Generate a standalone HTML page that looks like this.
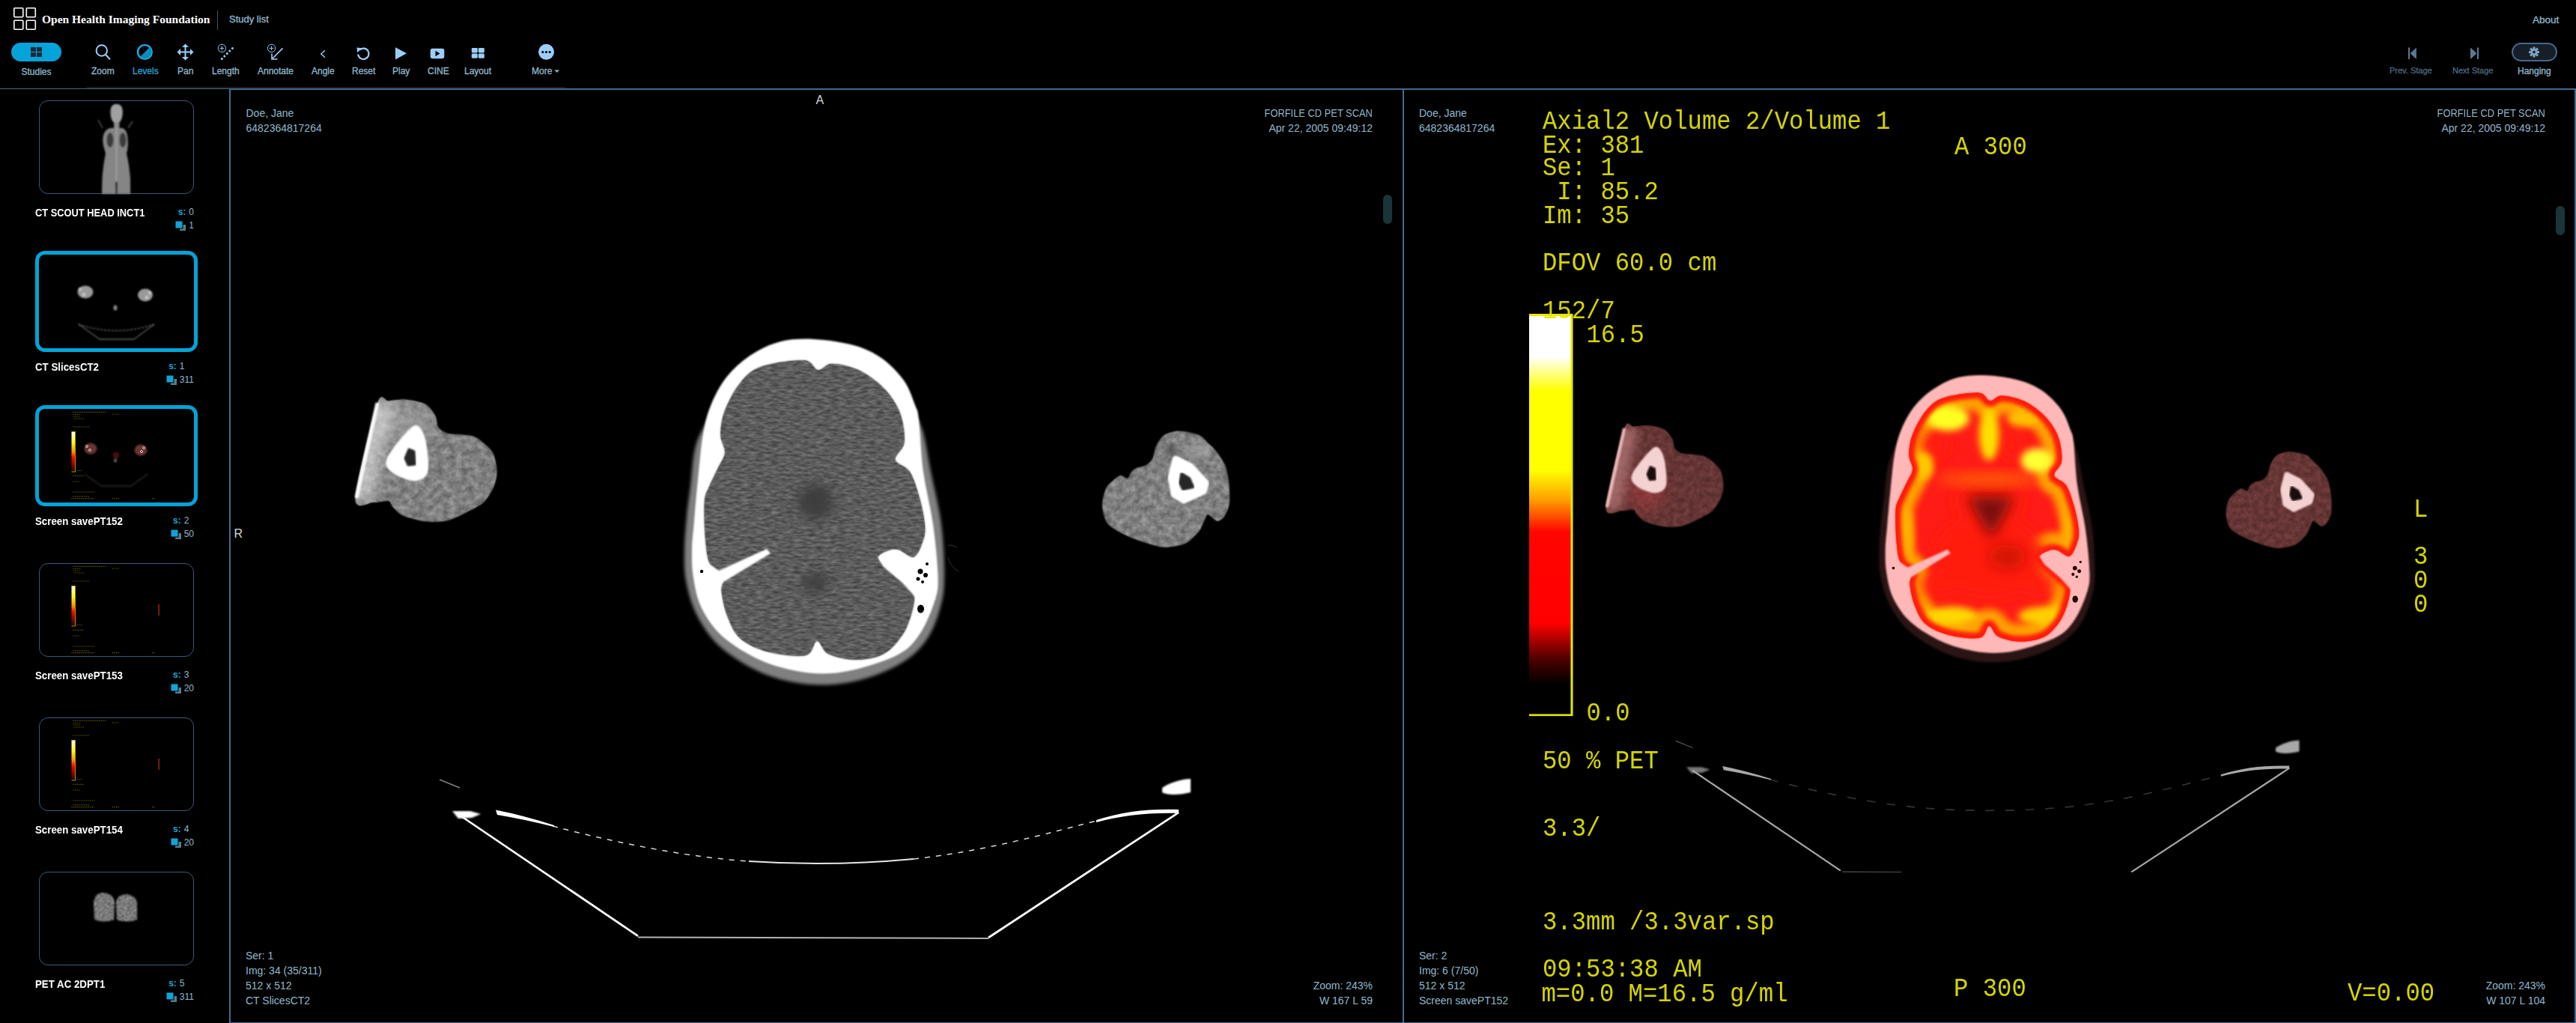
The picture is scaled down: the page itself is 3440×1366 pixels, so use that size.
<!DOCTYPE html>
<html><head><meta charset="utf-8">
<style>
*{margin:0;padding:0;box-sizing:border-box}
html,body{width:3440px;height:1366px;overflow:hidden;background:#000}
body{position:relative;font-family:"Liberation Sans",sans-serif;color:#91b9cd}
.a{position:absolute;white-space:pre;line-height:1}
.lbl{font-size:12px;color:#91b9cd;-webkit-text-stroke:0.3px currentColor}
.ov{font-size:14px;color:#91b9cd;}
.ye{font-family:"Liberation Mono",monospace;color:#e6e600;font-size:32.25px;opacity:0.92}
.tt{font-size:14px;color:#fff;font-weight:bold}
.sn{font-size:12px;color:#91b9cd}
.sl{color:#20a5d6;font-weight:bold}
svg{position:absolute;overflow:visible}
</style></head><body>

<!-- ===== HEADER ===== -->
<svg style="left:0;top:0" width="60" height="50">
 <g fill="none" stroke="#fff" stroke-width="1.6">
  <rect x="18.8" y="10.8" width="12" height="12" rx="1"/>
  <rect x="35.3" y="10.8" width="12" height="12" rx="1"/>
  <rect x="18.8" y="27.3" width="12" height="12" rx="1"/>
  <rect x="35.3" y="27.3" width="12" height="12" rx="1"/>
 </g>
</svg>
<div class="a" id="brand" style="left:56px;top:17.5px;font-family:'Liberation Serif',serif;font-weight:bold;font-size:15.5px;color:#fff">Open Health Imaging Foundation</div>
<div class="a" style="left:290px;top:14px;width:1px;height:26px;background:#3d5564"></div>
<div class="a" id="studylist" style="left:306px;top:19px;font-size:13px;color:#91b9cd;-webkit-text-stroke:0.3px #91b9cd">Study list</div>
<div class="a" id="about" style="left:3382px;top:19.5px;font-size:13.5px;color:#91b9cd;-webkit-text-stroke:0.3px #91b9cd">About</div>

<!-- ===== TOOLBAR ===== -->
<div class="a" style="left:15px;top:57px;width:67px;height:25px;border-radius:13px;background:#05a3d9"></div>
<svg style="left:41px;top:63px" width="16" height="14"><g fill="#1f2a38"><rect x="0" y="0" width="7" height="6"/><rect x="8" y="0" width="7" height="6"/><rect x="0" y="7" width="7" height="6"/><rect x="8" y="7" width="7" height="6"/></g></svg>
<div class="a lbl" style="left:28.5px;top:90px">Studies</div>

<!-- zoom -->
<svg style="left:120px;top:55px" width="32" height="30"><g fill="none" stroke="#9ccef9" stroke-width="2"><circle cx="15.8" cy="12.5" r="7.2"/><line x1="21" y1="18" x2="27" y2="24.2"/></g></svg>
<div class="a lbl" style="left:122px;top:89px">Zoom</div>
<!-- levels -->
<svg style="left:180px;top:56px" width="28" height="28"><circle cx="13.4" cy="13.5" r="9.4" fill="none" stroke="#18ade4" stroke-width="2.4"/><path d="M20 7 A9.2 9.2 0 0 1 7 20 Z" fill="#0a8cbd"/></svg>
<div class="a lbl" style="left:177px;top:89px;color:#20a5d6">Levels</div>
<!-- pan -->
<svg style="left:236px;top:58px" width="24" height="24"><g fill="#9ccef9" stroke="#9ccef9"><line x1="11.5" y1="2" x2="11.5" y2="21" stroke-width="2"/><line x1="2" y1="11.5" x2="21" y2="11.5" stroke-width="2"/><path d="M11.5 0.5 L16 5 L7 5Z M11.5 22.5 L16 18 L7 18Z M0.5 11.5 L5 7 L5 16Z M22.5 11.5 L18 7 L18 16Z" stroke="none"/></g></svg>
<div class="a lbl" style="left:237px;top:89px">Pan</div>
<!-- length -->
<svg style="left:288px;top:56px" width="30" height="30"><g fill="none" stroke="#9ccef9" stroke-width="1"><circle cx="8.4" cy="8.4" r="5.2"/><line x1="8.4" y1="5.5" x2="8.4" y2="11.3"/><line x1="5.5" y1="8.4" x2="11.3" y2="8.4"/></g><g fill="#9ccef9"><circle cx="8.4" cy="22.4" r="1.5"/><circle cx="11.8" cy="19" r="1.5"/><circle cx="15.3" cy="15.5" r="1.5"/><circle cx="18.8" cy="12" r="1.5"/><circle cx="22.4" cy="8.4" r="1.5"/></g></svg>
<div class="a lbl" style="left:283px;top:89px">Length</div>
<!-- annotate -->
<svg style="left:354px;top:56px" width="30" height="30"><g fill="none" stroke="#9ccef9" stroke-width="1"><circle cx="8.6" cy="8.4" r="5.2"/><line x1="8.6" y1="5.5" x2="8.6" y2="11.3"/><line x1="5.7" y1="8.4" x2="11.5" y2="8.4"/></g><g fill="none" stroke="#9ccef9" stroke-width="1.6"><line x1="23.5" y1="8.4" x2="9.5" y2="22.5"/><polyline points="9,15.5 9,23 16.5,23"/></g></svg>
<div class="a lbl" style="left:344px;top:89px">Annotate</div>
<!-- angle -->
<svg style="left:426px;top:64px" width="12" height="16"><polyline points="8,3.2 2.8,8 8,12.8" fill="none" stroke="#9ccef9" stroke-width="1.4"/></svg>
<div class="a lbl" style="left:416px;top:89px">Angle</div>
<!-- reset -->
<svg style="left:474px;top:61px" width="22" height="22"><path d="M6.5 5.5 A7.2 7.2 0 1 1 4.2 11.5" fill="none" stroke="#9ccef9" stroke-width="2.2"/><path d="M2.5 2.5 L9.5 3.2 L3.2 9.3Z" fill="#9ccef9"/></svg>
<div class="a lbl" style="left:470px;top:89px">Reset</div>
<!-- play -->
<svg style="left:526px;top:62px" width="20" height="20"><path d="M2 1.3 L17 9.3 L2 17.5Z" fill="#9ccef9"/></svg>
<div class="a lbl" style="left:524px;top:89px">Play</div>
<!-- cine -->
<svg style="left:573px;top:63px" width="22" height="18"><rect x="1.7" y="1.8" width="18.6" height="13.4" rx="3" fill="#9ccef9"/><path d="M8.5 4.8 L14.5 8.5 L8.5 12.2Z" fill="#000"/></svg>
<div class="a lbl" style="left:571px;top:89px">CINE</div>
<!-- layout -->
<svg style="left:628px;top:62px" width="22" height="18"><g fill="#9ccef9"><rect x="1.8" y="2" width="8" height="6.4" rx="1.3"/><rect x="10.8" y="2" width="8" height="6.4" rx="1.3"/><rect x="1.8" y="9.4" width="8" height="6.4" rx="1.3"/><rect x="10.8" y="9.4" width="8" height="6.4" rx="1.3"/></g></svg>
<div class="a lbl" style="left:620px;top:89px">Layout</div>
<!-- more -->
<svg style="left:716px;top:56px" width="28" height="28"><circle cx="13.5" cy="13.3" r="10.5" fill="#9ccef9"/><g fill="#000"><circle cx="8.8" cy="13.5" r="1.6"/><circle cx="13.5" cy="13.5" r="1.6"/><circle cx="18.2" cy="13.5" r="1.6"/></g></svg>
<div class="a lbl" style="left:710px;top:89px">More</div>
<svg style="left:740px;top:92px" width="10" height="8"><path d="M0.5 1.5 L7 1.5 L3.75 5Z" fill="#91b9cd"/></svg>

<!-- right toolbar -->
<svg style="left:3214px;top:62px" width="16" height="20"><rect x="2" y="1.5" width="2" height="15.5" fill="#5a7a94"/><path d="M12.8 1.5 L12.8 17 L4.5 9.2Z" fill="#5a7a94"/></svg>
<div class="a lbl" style="left:3191px;top:89px;font-size:11px;color:#4f6a80">Prev. Stage</div>
<svg style="left:3297px;top:62px" width="16" height="20"><rect x="11" y="1.5" width="2" height="15.5" fill="#5a7a94"/><path d="M2 1.5 L2 17 L10.5 9.2Z" fill="#5a7a94"/></svg>
<div class="a lbl" style="left:3275px;top:89px;font-size:11px;color:#4f6a80">Next Stage</div>
<div class="a" style="left:3354px;top:57px;width:61px;height:25px;border-radius:13px;background:#161e28;border:2px solid #46678c"></div>
<svg style="left:3375px;top:61px" width="18" height="18"><g transform="translate(9,8.6)" fill="#7ea3c4"><circle r="4.6"/><g id="teeth"><rect x="-1.5" y="-7" width="3" height="14"/><rect x="-1.5" y="-7" width="3" height="14" transform="rotate(45)"/><rect x="-1.5" y="-7" width="3" height="14" transform="rotate(90)"/><rect x="-1.5" y="-7" width="3" height="14" transform="rotate(135)"/></g><circle r="1.8" fill="#161e28"/></g></svg>
<div class="a lbl" style="left:3362px;top:89px">Hanging</div>

<!-- header bottom line -->
<div class="a" style="left:115px;top:115.5px;width:641px;height:2.5px;background:#161c22;border-radius:2px 2px 0 0"></div>
<div class="a" style="left:0;top:118px;width:3440px;height:1px;background:#4a6976"></div>

<!-- ===== SIDEBAR ===== -->
<div class="a" style="left:52px;top:134px;width:207px;height:125px;border:1px solid #3d5a76;border-radius:12px"></div>
<div class="a tt" style="left:46.5px;top:277.1px;transform:scaleX(0.918);transform-origin:0 0">CT SCOUT HEAD INCT1</div>
<div class="a" id="snum0" style="right:3181px;top:276.8px;font-size:12px;text-align:left"><table style="border-collapse:collapse;margin-left:auto"><tr><td class="sl" style="text-align:right;padding:0 4px 0 0;height:18.5px;vertical-align:top">s:</td><td style="padding:0;vertical-align:top;color:#91b9cd">0</td></tr><tr><td style="text-align:right;padding:0 4px 0 0;vertical-align:top"><svg style="position:relative;display:inline-block" width="14" height="14"><rect x="6" y="5" width="8" height="8" fill="#5a7a8a"/><rect x="0" y="0" width="10" height="10" fill="#0ea4d8" stroke="#000" stroke-width="1"/></svg></td><td style="padding:0;vertical-align:top;color:#91b9cd">1</td></tr></table></div>
<div class="a" style="left:47px;top:335px;width:217px;height:135px;border:5px solid #00a4d9;border-radius:13px"></div>
<div class="a tt" style="left:46.5px;top:483.1px;transform:scaleX(0.95);transform-origin:0 0">CT SlicesCT2</div>
<div class="a" id="snum1" style="right:3181px;top:482.8px;font-size:12px;text-align:left"><table style="border-collapse:collapse;margin-left:auto"><tr><td class="sl" style="text-align:right;padding:0 4px 0 0;height:18.5px;vertical-align:top">s:</td><td style="padding:0;vertical-align:top;color:#91b9cd">1</td></tr><tr><td style="text-align:right;padding:0 4px 0 0;vertical-align:top"><svg style="position:relative;display:inline-block" width="14" height="14"><rect x="6" y="5" width="8" height="8" fill="#5a7a8a"/><rect x="0" y="0" width="10" height="10" fill="#0ea4d8" stroke="#000" stroke-width="1"/></svg></td><td style="padding:0;vertical-align:top;color:#91b9cd">311</td></tr></table></div>
<div class="a" style="left:47px;top:541px;width:217px;height:135px;border:5px solid #00a4d9;border-radius:13px"></div>
<div class="a tt" style="left:46.5px;top:689.1px;transform:scaleX(0.95);transform-origin:0 0">Screen savePT152</div>
<div class="a" id="snum2" style="right:3181px;top:688.8px;font-size:12px;text-align:left"><table style="border-collapse:collapse;margin-left:auto"><tr><td class="sl" style="text-align:right;padding:0 4px 0 0;height:18.5px;vertical-align:top">s:</td><td style="padding:0;vertical-align:top;color:#91b9cd">2</td></tr><tr><td style="text-align:right;padding:0 4px 0 0;vertical-align:top"><svg style="position:relative;display:inline-block" width="14" height="14"><rect x="6" y="5" width="8" height="8" fill="#5a7a8a"/><rect x="0" y="0" width="10" height="10" fill="#0ea4d8" stroke="#000" stroke-width="1"/></svg></td><td style="padding:0;vertical-align:top;color:#91b9cd">50</td></tr></table></div>
<div class="a" style="left:52px;top:752px;width:207px;height:125px;border:1px solid #3d5a76;border-radius:12px"></div>
<div class="a tt" style="left:46.5px;top:895.1px;transform:scaleX(0.95);transform-origin:0 0">Screen savePT153</div>
<div class="a" id="snum3" style="right:3181px;top:894.8px;font-size:12px;text-align:left"><table style="border-collapse:collapse;margin-left:auto"><tr><td class="sl" style="text-align:right;padding:0 4px 0 0;height:18.5px;vertical-align:top">s:</td><td style="padding:0;vertical-align:top;color:#91b9cd">3</td></tr><tr><td style="text-align:right;padding:0 4px 0 0;vertical-align:top"><svg style="position:relative;display:inline-block" width="14" height="14"><rect x="6" y="5" width="8" height="8" fill="#5a7a8a"/><rect x="0" y="0" width="10" height="10" fill="#0ea4d8" stroke="#000" stroke-width="1"/></svg></td><td style="padding:0;vertical-align:top;color:#91b9cd">20</td></tr></table></div>
<div class="a" style="left:52px;top:958px;width:207px;height:125px;border:1px solid #3d5a76;border-radius:12px"></div>
<div class="a tt" style="left:46.5px;top:1101.1px;transform:scaleX(0.95);transform-origin:0 0">Screen savePT154</div>
<div class="a" id="snum4" style="right:3181px;top:1100.8px;font-size:12px;text-align:left"><table style="border-collapse:collapse;margin-left:auto"><tr><td class="sl" style="text-align:right;padding:0 4px 0 0;height:18.5px;vertical-align:top">s:</td><td style="padding:0;vertical-align:top;color:#91b9cd">4</td></tr><tr><td style="text-align:right;padding:0 4px 0 0;vertical-align:top"><svg style="position:relative;display:inline-block" width="14" height="14"><rect x="6" y="5" width="8" height="8" fill="#5a7a8a"/><rect x="0" y="0" width="10" height="10" fill="#0ea4d8" stroke="#000" stroke-width="1"/></svg></td><td style="padding:0;vertical-align:top;color:#91b9cd">20</td></tr></table></div>
<div class="a" style="left:52px;top:1164px;width:207px;height:125px;border:1px solid #3d5a76;border-radius:12px"></div>
<div class="a tt" style="left:46.5px;top:1307.1px;transform:scaleX(0.95);transform-origin:0 0">PET AC 2DPT1</div>
<div class="a" id="snum5" style="right:3181px;top:1306.8px;font-size:12px;text-align:left"><table style="border-collapse:collapse;margin-left:auto"><tr><td class="sl" style="text-align:right;padding:0 4px 0 0;height:18.5px;vertical-align:top">s:</td><td style="padding:0;vertical-align:top;color:#91b9cd">5</td></tr><tr><td style="text-align:right;padding:0 4px 0 0;vertical-align:top"><svg style="position:relative;display:inline-block" width="14" height="14"><rect x="6" y="5" width="8" height="8" fill="#5a7a8a"/><rect x="0" y="0" width="10" height="10" fill="#0ea4d8" stroke="#000" stroke-width="1"/></svg></td><td style="padding:0;vertical-align:top;color:#91b9cd">311</td></tr></table></div>
<svg style="left:0;top:0" width="310" height="1366"><defs><filter id="tb" x="-20%" y="-20%" width="140%" height="140%"><feGaussianBlur stdDeviation="0.8"/></filter><linearGradient id="cbs" x1="0" y1="0" x2="0" y2="1"><stop offset="0" stop-color="#fff"/><stop offset="0.25" stop-color="#ffff20"/><stop offset="0.5" stop-color="#ff9000"/><stop offset="0.65" stop-color="#ff0000"/><stop offset="1" stop-color="#200000"/></linearGradient></defs>
<g filter="url(#tb)"><path d="M147.5,150 C147.5,141 151,139 155.5,139 C160,139 163.8,141 163.8,150 C163.8,157 161,165 155.5,165 C150,165 147.5,157 147.5,150Z" fill="#a0a0a0"/><rect x="152" y="163" width="7.5" height="9" fill="#8a8a8a"/><path d="M148,171 C141,172 137.3,178 137.3,188 C137.5,195 140,200 141,205 C139,215 137.3,226 136.5,238 L136,259 L174.2,259 L174,238 C173,226 171.5,215 169,205 C170.5,200 171,195 170.8,188 C170.5,178 168,172 163,171Z" fill="#858585"/><ellipse cx="147" cy="187" rx="4.5" ry="10" fill="#3a3a3a"/><ellipse cx="164" cy="187" rx="4.5" ry="10" fill="#3a3a3a"/><rect x="154.5" y="171" width="2" height="70" fill="#b5b5b5" opacity="0.6"/><path d="M154,243 L157,243 L156.5,259 L154.5,259Z" fill="#1a1a1a"/><path d="M137,171 L131,160 M171,171 L177,162" stroke="#555" stroke-width="1.5"/></g>
<g filter="url(#tb)"><ellipse cx="114" cy="390" rx="10.5" ry="8.5" fill="#9a9a9a"/><ellipse cx="194" cy="394" rx="10" ry="8.5" fill="#9a9a9a"/><g fill="none" stroke="#eee" stroke-width="1"><circle cx="106.7" cy="386" r="1.6"/><circle cx="112" cy="393.3" r="1.6"/><circle cx="200.2" cy="390.8" r="1.6"/><circle cx="195.9" cy="397.3" r="1.6"/></g><ellipse cx="154" cy="411" rx="2.5" ry="3.5" fill="#888"/><path d="M105,433 L133,453 L179,453 L206,433" fill="none" stroke="#bbb" stroke-width="0.8"/><path d="M105,433 Q155,450 206,433" fill="none" stroke="#ccc" stroke-width="0.8" stroke-dasharray="3 2"/></g>
<g stroke="#c8b400" stroke-width="1.2" stroke-dasharray="1.2 1.3" opacity="0.55"><path d="M97.5,550.3 H142.5"/><path d="M97.5,553.5 H108.0"/><path d="M97.5,556.0 H106.0"/><path d="M98.5,559.0 H112.0"/><path d="M97.5,570.0 H119.0"/><path d="M103.0,628.5 H110.0"/><path d="M97.5,635.4 H112.0"/><path d="M97.5,643.0 H106.0"/><path d="M97.5,657.0 H127.0"/><path d="M97.5,662.8 H120.0"/><path d="M95.5,665.7 H126.0"/><path d="M150,553.0 H160" /><path d="M150,665.7 H160"/><path d="M203,665.7 H207"/></g><rect x="95.5" y="576.7" width="4.6" height="52.8" fill="url(#cbs)"/><path d="M95.5,576.5 H100.6 V630.0 H95.5" fill="none" stroke="#d8c800" stroke-width="0.8"/>
<g filter="url(#tb)"><ellipse cx="121" cy="599" rx="8.5" ry="7.5" fill="#6a3434"/><ellipse cx="188" cy="601" rx="8.5" ry="7.5" fill="#6a3434"/><circle cx="155" cy="608" r="4.5" fill="#4a0808"/><ellipse cx="154" cy="615" rx="2" ry="2.5" fill="#666"/><path d="M113,633 L135,649 L175,649 L197,633" fill="none" stroke="#666" stroke-width="0.7"/></g><g fill="none" stroke="#ddd" stroke-width="0.9"><circle cx="116" cy="596" r="1.5"/><circle cx="120" cy="601" r="1.5"/><circle cx="192" cy="598" r="1.5"/><circle cx="189" cy="603" r="1.5"/></g>
<g stroke="#c8b400" stroke-width="1.2" stroke-dasharray="1.2 1.3" opacity="0.55"><path d="M97.5,756.3 H142.5"/><path d="M97.5,759.5 H108.0"/><path d="M97.5,762.0 H106.0"/><path d="M98.5,765.0 H112.0"/><path d="M97.5,776.0 H119.0"/><path d="M103.0,834.5 H110.0"/><path d="M97.5,841.4 H112.0"/><path d="M97.5,849.0 H106.0"/><path d="M97.5,863.0 H127.0"/><path d="M97.5,868.8 H120.0"/><path d="M95.5,871.7 H126.0"/><path d="M150,759.0 H160" /><path d="M150,871.7 H160"/><path d="M203,871.7 H207"/></g><rect x="95.5" y="782.7" width="4.6" height="52.8" fill="url(#cbs)"/><path d="M95.5,782.5 H100.6 V836.0 H95.5" fill="none" stroke="#d8c800" stroke-width="0.8"/>
<rect x="211.5" y="807" width="1.2" height="15" fill="#c03010"/>
<g stroke="#c8b400" stroke-width="1.2" stroke-dasharray="1.2 1.3" opacity="0.55"><path d="M97.5,962.3 H142.5"/><path d="M97.5,965.5 H108.0"/><path d="M97.5,968.0 H106.0"/><path d="M98.5,971.0 H112.0"/><path d="M97.5,982.0 H119.0"/><path d="M103.0,1040.5 H110.0"/><path d="M97.5,1047.4 H112.0"/><path d="M97.5,1055.0 H106.0"/><path d="M97.5,1069.0 H127.0"/><path d="M97.5,1074.8 H120.0"/><path d="M95.5,1077.7 H126.0"/><path d="M150,965.0 H160" /><path d="M150,1077.7 H160"/><path d="M203,1077.7 H207"/></g><rect x="95.5" y="988.7" width="4.6" height="52.8" fill="url(#cbs)"/><path d="M95.5,988.5 H100.6 V1042.0 H95.5" fill="none" stroke="#d8c800" stroke-width="0.8"/>
<rect x="211.5" y="1013" width="1.2" height="15" fill="#c03010"/>
<defs><filter id="tex" x="0" y="0" width="100%" height="100%"><feTurbulence type="fractalNoise" baseFrequency="0.5" numOctaves="2" seed="3"/><feColorMatrix type="matrix" values="0 0 0 0 0.6  0 0 0 0 0.6  0 0 0 0 0.6  0 0 0 2 -0.6"/><feComposite in2="SourceGraphic" operator="in"/></filter></defs>
<clipPath id="t6c"><path d="M125,1205 Q127,1192 138,1192 Q152,1193 153,1206 L152,1228 Q140,1233 126,1228Z"/><path d="M155,1206 Q156,1194 169,1194 Q183,1196 183,1208 L183,1228 Q170,1233 156,1228Z"/></clipPath><filter id="t6n" x="0" y="0" width="100%" height="100%" color-interpolation-filters="sRGB"><feTurbulence type="fractalNoise" baseFrequency="0.6" numOctaves="2" seed="9"/><feColorMatrix type="matrix" values="1.3 0 0 0 -0.2  1.3 0 0 0 -0.2  1.3 0 0 0 -0.2  0 0 0 0 1"/></filter><g filter="url(#tb)"><rect x="120" y="1188" width="70" height="48" fill="#000" filter="url(#t6n)" clip-path="url(#t6c)"/></g>
</svg>

<!-- ===== VIEWPORTS ===== -->
<svg style="left:0;top:0" width="3440" height="1366" viewBox="0 0 3440 1366"><defs>
<filter id="b05" x="-10%" y="-10%" width="120%" height="120%"><feGaussianBlur stdDeviation="0.5"/></filter>
<filter id="b1" x="-10%" y="-10%" width="120%" height="120%"><feGaussianBlur stdDeviation="1"/></filter>
<filter id="b2" x="-50%" y="-10%" width="200%" height="120%"><feGaussianBlur stdDeviation="2"/></filter>
<filter id="b3" x="-20%" y="-20%" width="140%" height="140%"><feGaussianBlur stdDeviation="3"/></filter>
<filter id="b4" x="-20%" y="-20%" width="140%" height="140%"><feGaussianBlur stdDeviation="4"/></filter>
<filter id="b6" x="-30%" y="-30%" width="160%" height="160%"><feGaussianBlur stdDeviation="6"/></filter>
<filter id="b8w" x="-300%" y="-30%" width="700%" height="160%"><feGaussianBlur stdDeviation="8"/></filter>
<filter id="b8" x="-50%" y="-50%" width="200%" height="200%"><feGaussianBlur stdDeviation="8"/></filter>
<filter id="b10" x="-50%" y="-50%" width="200%" height="200%"><feGaussianBlur stdDeviation="10"/></filter>
<filter id="noiseCT" x="0" y="0" width="100%" height="100%" color-interpolation-filters="sRGB"><feTurbulence type="fractalNoise" baseFrequency="0.1 0.3" numOctaves="2" seed="7"/><feColorMatrix type="matrix" values="0.55 0 0 0 0.085  0.55 0 0 0 0.085  0.55 0 0 0 0.085  0 0 0 0 1"/></filter>
<filter id="noiseArm" x="0" y="0" width="100%" height="100%" color-interpolation-filters="sRGB"><feTurbulence type="fractalNoise" baseFrequency="0.12" numOctaves="3" seed="11"/><feColorMatrix type="matrix" values="0.6 0 0 0 0.2  0.6 0 0 0 0.2  0.6 0 0 0 0.2  0 0 0 0 1"/></filter>
<filter id="noisePet" x="0" y="0" width="100%" height="100%" color-interpolation-filters="sRGB"><feTurbulence type="fractalNoise" baseFrequency="0.12" numOctaves="3" seed="5"/><feColorMatrix type="matrix" values="0.4 0 0 0 0.2  0.25 0 0 0 0.09  0.25 0 0 0 0.09  0 0 0 0 1"/></filter>
<clipPath id="armclip"><path d="M518.7,535.6 C523.8,534.9 535.6,533.2 542.1,533.7 C548.6,534.2 562.3,536.7 567.5,539.6 C572.7,542.5 578.9,551.0 581.2,555.2 C583.5,559.4 583.0,567.7 585.1,570.8 C587.2,573.9 592.7,577.4 596.9,578.7 C601.1,580.0 611.2,579.8 616.4,580.6 C621.6,581.4 630.5,581.4 636.0,584.5 C641.5,587.6 653.8,598.0 657.5,604.0 C661.2,610.0 663.1,623.5 663.4,629.5 C663.7,635.5 661.8,643.5 659.5,649.0 C657.2,654.5 650.8,665.9 645.8,670.6 C640.8,675.3 628.8,681.0 622.3,684.3 C615.8,687.6 604.2,693.4 596.9,695.0 C589.6,696.6 575.3,696.9 567.5,696.0 C559.7,695.1 543.9,690.8 538.2,688.2 C532.5,685.6 527.1,679.0 524.5,676.4 C521.9,673.8 522.1,669.4 518.7,668.6 C515.3,667.8 504.9,671.0 499.0,670.6 C493.1,670.2 474.0,683.3 474.7,665.7 C475.4,648.1 498.1,555.9 504.0,538.6 C509.9,521.3 513.6,536.3 518.7,535.6Z"/><path d="M1544.4,595.2 C1546.5,591.0 1551.0,583.7 1555.0,581.1 C1559.0,578.5 1568.2,575.8 1574.3,575.8 C1580.4,575.8 1595.5,579.0 1600.7,581.1 C1605.9,583.2 1609.9,588.9 1613.0,591.7 C1616.1,594.5 1620.5,598.2 1623.6,602.2 C1626.7,606.2 1633.6,615.5 1635.9,621.6 C1638.2,627.7 1640.5,641.0 1641.2,648.0 C1641.9,655.0 1642.1,668.7 1641.2,674.3 C1640.3,679.9 1636.2,687.4 1634.1,690.2 C1632.0,693.0 1628.1,695.9 1625.3,695.4 C1622.5,694.9 1615.3,686.7 1613.0,686.7 C1610.7,686.7 1609.4,692.4 1607.8,695.4 C1606.2,698.4 1604.0,705.5 1600.7,709.5 C1597.4,713.5 1589.2,722.5 1583.1,725.3 C1577.0,728.1 1562.5,730.8 1555.0,730.6 C1547.5,730.4 1534.1,725.9 1526.8,723.6 C1519.5,721.3 1506.8,716.3 1500.5,713.0 C1494.2,709.7 1483.1,703.9 1479.3,699.0 C1475.5,694.1 1472.5,682.4 1472.3,676.1 C1472.1,669.8 1474.5,656.9 1477.6,651.5 C1480.7,646.1 1491.5,637.2 1495.2,635.6 C1498.9,634.0 1503.6,639.9 1505.7,639.2 C1507.8,638.5 1509.4,632.3 1511.0,630.4 C1512.6,628.5 1515.4,626.3 1518.0,625.1 C1520.6,623.9 1527.6,623.2 1530.4,621.6 C1533.2,620.0 1537.3,616.3 1539.2,612.8 C1541.1,609.3 1542.3,599.4 1544.4,595.2Z"/></clipPath>
<clipPath id="brainclip"><path d="M1092.3,494.0 C1098.5,494.8 1102.0,485.7 1111.0,485.7 C1120.0,485.7 1135.3,489.1 1146.3,494.0 C1157.3,498.9 1168.6,507.6 1176.8,515.0 C1185.0,522.4 1190.9,530.7 1195.6,538.5 C1200.3,546.3 1203.0,553.0 1205.0,562.0 C1207.0,571.0 1208.9,583.8 1207.3,592.5 C1205.7,601.2 1194.3,607.8 1195.6,614.0 C1196.9,620.2 1209.6,621.5 1215.0,630.0 C1220.4,638.5 1224.7,653.3 1228.0,665.0 C1231.3,676.7 1234.2,690.7 1235.0,700.0 C1235.8,709.3 1235.5,713.5 1233.0,720.8 C1230.5,728.1 1226.2,741.6 1220.3,743.7 C1214.4,745.8 1205.0,733.9 1197.4,733.5 C1189.8,733.1 1177.5,737.8 1174.5,741.2 C1171.5,744.6 1174.5,748.0 1179.6,753.9 C1184.7,759.8 1198.2,770.4 1205.0,776.8 C1211.8,783.1 1218.2,785.2 1220.3,792.0 C1222.4,798.8 1220.3,808.1 1217.8,817.4 C1215.2,826.7 1211.4,838.7 1205.0,848.0 C1198.6,857.3 1190.2,867.9 1179.6,873.4 C1169.0,878.9 1153.8,881.1 1141.5,881.0 C1129.2,880.9 1114.4,877.2 1106.0,873.0 C1097.6,868.8 1096.0,855.7 1091.0,856.0 C1086.0,856.3 1086.7,872.5 1076.0,875.0 C1065.3,877.5 1041.6,874.5 1027.1,870.8 C1012.6,867.1 998.3,861.0 989.0,853.0 C979.7,845.0 975.5,833.1 971.2,822.5 C967.0,811.9 964.4,798.2 963.5,789.5 C962.6,780.8 968.5,775.9 966.0,770.0 C963.5,764.1 952.3,762.1 948.3,753.9 C944.3,745.7 943.3,734.8 942.0,720.8 C940.7,706.8 939.9,681.8 940.7,670.0 C941.5,658.2 943.9,657.5 946.9,650.0 C949.9,642.5 955.1,632.9 958.6,625.3 C962.1,617.7 967.4,611.6 968.0,604.2 C968.6,596.8 962.2,590.1 962.2,580.7 C962.2,571.3 963.5,559.7 968.0,548.0 C972.5,536.3 980.9,520.2 989.1,510.4 C997.3,500.6 1003.2,494.2 1017.3,489.3 C1031.4,484.4 1061.1,480.2 1073.6,481.0 C1086.1,481.8 1086.1,493.2 1092.3,494.0Z"/></clipPath>
</defs><g><path d="M1087.7,460.0 C1103.4,460.8 1122.3,464.0 1136.0,468.0 C1149.7,472.0 1159.7,476.7 1170.0,484.0 C1180.3,491.3 1190.3,501.8 1198.0,512.0 C1205.7,522.2 1210.3,534.5 1216.0,545.0 C1221.7,555.5 1227.5,560.8 1232.0,575.0 C1236.5,589.2 1238.8,609.2 1243.0,630.0 C1247.2,650.8 1254.0,676.5 1257.0,700.0 C1260.0,723.5 1261.2,752.7 1261.0,771.0 C1260.8,789.3 1259.5,796.8 1256.0,810.0 C1252.5,823.2 1247.3,838.3 1240.0,850.0 C1232.7,861.7 1224.5,871.2 1212.0,880.0 C1199.5,888.8 1181.7,897.3 1165.0,903.0 C1148.3,908.7 1129.5,912.7 1112.0,914.0 C1094.5,915.3 1077.0,914.2 1060.0,911.0 C1043.0,907.8 1026.7,903.2 1010.0,895.0 C993.3,886.8 973.3,874.5 960.0,862.0 C946.7,849.5 937.3,834.5 930.0,820.0 C922.7,805.5 918.7,789.2 916.0,775.0 C913.3,760.8 913.8,749.2 914.0,735.0 C914.2,720.8 915.7,704.2 917.0,690.0 C918.3,675.8 919.8,666.3 922.0,650.0 C924.2,633.7 924.5,609.5 930.0,592.0 C935.5,574.5 947.3,559.0 955.0,545.0 C962.7,531.0 967.7,518.7 976.0,508.0 C984.3,497.3 994.0,488.5 1005.0,481.0 C1016.0,473.5 1028.2,466.5 1042.0,463.0 C1055.8,459.5 1072.0,459.2 1087.7,460.0Z" fill="#808080" filter="url(#b2)" opacity="1"/>
<path d="M1087.7,452.9 C1104.2,453.7 1125.1,456.8 1140.0,461.0 C1154.9,465.2 1165.8,470.2 1177.0,478.0 C1188.2,485.8 1199.5,497.5 1207.0,508.0 C1214.5,518.5 1218.7,532.3 1222.0,541.0 C1225.3,549.7 1225.2,545.2 1227.0,560.0 C1228.8,574.8 1229.8,606.7 1233.0,630.0 C1236.2,653.3 1242.7,676.5 1246.0,700.0 C1249.3,723.5 1252.2,754.0 1252.6,771.0 C1253.0,788.0 1252.0,790.2 1248.3,802.2 C1244.6,814.2 1237.7,831.5 1230.5,842.9 C1223.3,854.3 1216.8,863.1 1205.0,870.8 C1193.2,878.5 1175.5,884.3 1160.0,889.0 C1144.5,893.7 1127.8,897.8 1112.0,899.0 C1096.2,900.2 1081.5,899.2 1065.2,896.2 C1048.9,893.2 1031.1,888.7 1014.4,881.0 C997.7,873.3 977.9,861.5 965.0,850.0 C952.1,838.5 943.5,825.0 937.0,812.0 C930.5,799.0 928.2,784.8 926.0,771.7 C923.8,758.6 923.8,746.2 924.0,733.5 C924.2,720.8 925.7,711.0 927.0,695.4 C928.3,679.8 930.0,659.1 932.0,640.0 C934.0,620.9 935.8,597.2 938.7,580.7 C941.6,564.2 944.0,553.8 949.3,540.9 C954.6,528.0 961.8,514.2 970.4,503.3 C979.0,492.4 989.2,483.0 1000.9,475.2 C1012.6,467.4 1026.2,460.1 1040.7,456.4 C1055.2,452.7 1071.2,452.1 1087.7,452.9Z" fill="#ffffff" filter="url(#b1)"/>
<path d="M1092.3,494.0 C1098.5,494.8 1102.0,485.7 1111.0,485.7 C1120.0,485.7 1135.3,489.1 1146.3,494.0 C1157.3,498.9 1168.6,507.6 1176.8,515.0 C1185.0,522.4 1190.9,530.7 1195.6,538.5 C1200.3,546.3 1203.0,553.0 1205.0,562.0 C1207.0,571.0 1208.9,583.8 1207.3,592.5 C1205.7,601.2 1194.3,607.8 1195.6,614.0 C1196.9,620.2 1209.6,621.5 1215.0,630.0 C1220.4,638.5 1224.7,653.3 1228.0,665.0 C1231.3,676.7 1234.2,690.7 1235.0,700.0 C1235.8,709.3 1235.5,713.5 1233.0,720.8 C1230.5,728.1 1226.2,741.6 1220.3,743.7 C1214.4,745.8 1205.0,733.9 1197.4,733.5 C1189.8,733.1 1177.5,737.8 1174.5,741.2 C1171.5,744.6 1174.5,748.0 1179.6,753.9 C1184.7,759.8 1198.2,770.4 1205.0,776.8 C1211.8,783.1 1218.2,785.2 1220.3,792.0 C1222.4,798.8 1220.3,808.1 1217.8,817.4 C1215.2,826.7 1211.4,838.7 1205.0,848.0 C1198.6,857.3 1190.2,867.9 1179.6,873.4 C1169.0,878.9 1153.8,881.1 1141.5,881.0 C1129.2,880.9 1114.4,877.2 1106.0,873.0 C1097.6,868.8 1096.0,855.7 1091.0,856.0 C1086.0,856.3 1086.7,872.5 1076.0,875.0 C1065.3,877.5 1041.6,874.5 1027.1,870.8 C1012.6,867.1 998.3,861.0 989.0,853.0 C979.7,845.0 975.5,833.1 971.2,822.5 C967.0,811.9 964.4,798.2 963.5,789.5 C962.6,780.8 968.5,775.9 966.0,770.0 C963.5,764.1 952.3,762.1 948.3,753.9 C944.3,745.7 943.3,734.8 942.0,720.8 C940.7,706.8 939.9,681.8 940.7,670.0 C941.5,658.2 943.9,657.5 946.9,650.0 C949.9,642.5 955.1,632.9 958.6,625.3 C962.1,617.7 967.4,611.6 968.0,604.2 C968.6,596.8 962.2,590.1 962.2,580.7 C962.2,571.3 963.5,559.7 968.0,548.0 C972.5,536.3 980.9,520.2 989.1,510.4 C997.3,500.6 1003.2,494.2 1017.3,489.3 C1031.4,484.4 1061.1,480.2 1073.6,481.0 C1086.1,481.8 1086.1,493.2 1092.3,494.0Z" fill="#5c5c5c" filter="url(#b1)"/>
<rect x="915" y="470" width="330" height="420" fill="#000" filter="url(#noiseCT)" clip-path="url(#brainclip)" opacity="0.6"/>
<g filter="url(#b8)" fill="#3e3e3e"><ellipse cx="1089" cy="670" rx="24" ry="24"/><ellipse cx="1089" cy="778" rx="18" ry="13"/></g>
<g fill="#ffffff" filter="url(#b1)"><path d="M934,744 L960,762 L1024,733 L1029,739 L968,776 L945,788 L934,775Z"/><path d="M1172,744 L1192,734 L1204,738 L1218,766 L1236,790 L1250,800 L1222,797 L1205,778 L1180,757Z"/></g>
<g fill="#000" filter="url(#b05)"><circle cx="1229" cy="763" r="3.5"/><circle cx="1236" cy="768" r="3"/><circle cx="1226" cy="773" r="2.5"/><circle cx="1238" cy="753" r="2"/><circle cx="1232" cy="777" r="2"/><ellipse cx="1229.5" cy="813" rx="4.5" ry="5.5"/><circle cx="937" cy="763" r="2.2"/></g>
<g fill="none" stroke="#a0a0a0" stroke-width="1" filter="url(#b05)" opacity="0.3"><path d="M1266,744 Q1268,756 1280,763"/><path d="M1266,728 Q1272,727 1278,731"/></g>
<path d="M518.7,535.6 C523.8,534.9 535.6,533.2 542.1,533.7 C548.6,534.2 562.3,536.7 567.5,539.6 C572.7,542.5 578.9,551.0 581.2,555.2 C583.5,559.4 583.0,567.7 585.1,570.8 C587.2,573.9 592.7,577.4 596.9,578.7 C601.1,580.0 611.2,579.8 616.4,580.6 C621.6,581.4 630.5,581.4 636.0,584.5 C641.5,587.6 653.8,598.0 657.5,604.0 C661.2,610.0 663.1,623.5 663.4,629.5 C663.7,635.5 661.8,643.5 659.5,649.0 C657.2,654.5 650.8,665.9 645.8,670.6 C640.8,675.3 628.8,681.0 622.3,684.3 C615.8,687.6 604.2,693.4 596.9,695.0 C589.6,696.6 575.3,696.9 567.5,696.0 C559.7,695.1 543.9,690.8 538.2,688.2 C532.5,685.6 527.1,679.0 524.5,676.4 C521.9,673.8 522.1,669.4 518.7,668.6 C515.3,667.8 504.9,671.0 499.0,670.6 C493.1,670.2 474.0,683.3 474.7,665.7 C475.4,648.1 498.1,555.9 504.0,538.6 C509.9,521.3 513.6,536.3 518.7,535.6Z" fill="#808080" filter="url(#b1)"/>
<path d="M1544.4,595.2 C1546.5,591.0 1551.0,583.7 1555.0,581.1 C1559.0,578.5 1568.2,575.8 1574.3,575.8 C1580.4,575.8 1595.5,579.0 1600.7,581.1 C1605.9,583.2 1609.9,588.9 1613.0,591.7 C1616.1,594.5 1620.5,598.2 1623.6,602.2 C1626.7,606.2 1633.6,615.5 1635.9,621.6 C1638.2,627.7 1640.5,641.0 1641.2,648.0 C1641.9,655.0 1642.1,668.7 1641.2,674.3 C1640.3,679.9 1636.2,687.4 1634.1,690.2 C1632.0,693.0 1628.1,695.9 1625.3,695.4 C1622.5,694.9 1615.3,686.7 1613.0,686.7 C1610.7,686.7 1609.4,692.4 1607.8,695.4 C1606.2,698.4 1604.0,705.5 1600.7,709.5 C1597.4,713.5 1589.2,722.5 1583.1,725.3 C1577.0,728.1 1562.5,730.8 1555.0,730.6 C1547.5,730.4 1534.1,725.9 1526.8,723.6 C1519.5,721.3 1506.8,716.3 1500.5,713.0 C1494.2,709.7 1483.1,703.9 1479.3,699.0 C1475.5,694.1 1472.5,682.4 1472.3,676.1 C1472.1,669.8 1474.5,656.9 1477.6,651.5 C1480.7,646.1 1491.5,637.2 1495.2,635.6 C1498.9,634.0 1503.6,639.9 1505.7,639.2 C1507.8,638.5 1509.4,632.3 1511.0,630.4 C1512.6,628.5 1515.4,626.3 1518.0,625.1 C1520.6,623.9 1527.6,623.2 1530.4,621.6 C1533.2,620.0 1537.3,616.3 1539.2,612.8 C1541.1,609.3 1542.3,599.4 1544.4,595.2Z" fill="#808080" filter="url(#b1)"/>
<g clip-path="url(#armclip)"><rect x="470" y="528" width="200" height="172" fill="#000" filter="url(#noiseArm)" opacity="0.55"/><rect x="1465" y="570" width="185" height="165" fill="#000" filter="url(#noiseArm)" opacity="0.55"/></g>
<ellipse cx="540" cy="565" rx="40" ry="28" fill="#b0b0b0" opacity="0.45" filter="url(#b10)" clip-path="url(#armclip)"/>
<ellipse cx="1600" cy="602" rx="18" ry="9" fill="#c0c0c0" opacity="0.45" filter="url(#b6)" clip-path="url(#armclip)"/>
<ellipse cx="1564" cy="602" rx="5" ry="9" fill="#303030" opacity="0.6" filter="url(#b3)" clip-path="url(#armclip)"/>
<path d="M510,536 L481,668" stroke="#f0f0f0" stroke-width="34" filter="url(#b8w)" opacity="0.55" clip-path="url(#armclip)"/>
<path d="M504,538 L476,665" stroke="#fff" stroke-width="5" filter="url(#b1)" opacity="0.95"/>
<path d="M551.9,568.9 C559.5,564.8 564.6,575.4 567.5,584.5 C570.4,593.6 573.5,620.8 571.5,629.5 C569.5,638.2 560.9,641.9 553.9,642.2 C546.9,642.5 530.1,636.0 524.5,631.5 C518.9,627.0 512.6,621.3 516.7,611.9 C520.8,602.5 544.3,573.0 551.9,568.9Z" fill="#ffffff" filter="url(#b1)"/>
<path d="M546,600 L553,603 L554,620 L545,621 L541,612Z" fill="#262626" stroke="#262626" stroke-width="3" stroke-linejoin="round" filter="url(#b1)"/>
<path d="M1570.0,613.0 L1590.0,623.0 L1610.0,645.0 L1607.0,656.0 L1581.0,668.0 L1568.0,660.0 L1564.0,637.0Z" fill="#ffffff" stroke="#ffffff" stroke-width="9" stroke-linejoin="round" filter="url(#b1)"/>
<path d="M1578,633 L1588,639 L1593,650 L1580,653 L1576,645Z" fill="#262626" stroke="#262626" stroke-width="4" stroke-linejoin="round" filter="url(#b1)"/>
<g fill="none" stroke="#ffffff" filter="url(#b05)">
<path d="M613.8,1088.5 L852,1249.8" stroke-width="2.7"/>
<path d="M1574,1084.8 L1320,1252" stroke-width="2.7"/>
<path d="M852,1251.5 L1320,1253" stroke-width="2" opacity="0.7"/>
</g><path d="M662,1081.5 Q700,1089 740,1102 L740,1104 Q700,1094 664,1088Z" fill="#ffffff" filter="url(#b05)"/><g fill="none" stroke="#ffffff" filter="url(#b05)">
<path d="M738,1103 C820,1125 920,1145 1000,1150" stroke-width="1.5" stroke-dasharray="7 8" opacity="0.85"/>
<path d="M1000,1150 C1060,1154 1134,1155 1220,1147" stroke-width="2" opacity="0.9"/>
<path d="M1220,1147 C1300,1138 1366,1122 1464,1096" stroke-width="1.5" stroke-dasharray="7 8" opacity="0.85"/>
</g><path d="M1464,1095 C1500,1084 1530,1080 1574,1081 L1574,1086 C1530,1085 1500,1089 1464,1098Z" fill="#ffffff" filter="url(#b05)"/><g fill="none" stroke="#ffffff" filter="url(#b05)">
</g>
<path d="M604,1083 L628,1083 L642,1087 L630,1092 L612,1093Z" fill="#ffffff" filter="url(#b1)" opacity="1"/>
<g fill="none" stroke="#ffffff" filter="url(#b05)">
<path d="M587,1041 L614,1052" stroke-width="1.5" opacity="0.5"/>
</g>
<path d="M1552,1052 C1560,1046 1578,1040 1590,1040 L1590,1058 C1575,1062 1558,1062 1552,1058Z" fill="#ffffff" filter="url(#b1)"/></g><g transform="matrix(0.83,0,0,0.83,1750.75,125.3)"><path d="M1087.7,460.0 C1103.4,460.8 1122.3,464.0 1136.0,468.0 C1149.7,472.0 1159.7,476.7 1170.0,484.0 C1180.3,491.3 1190.3,501.8 1198.0,512.0 C1205.7,522.2 1210.3,534.5 1216.0,545.0 C1221.7,555.5 1227.5,560.8 1232.0,575.0 C1236.5,589.2 1238.8,609.2 1243.0,630.0 C1247.2,650.8 1254.0,676.5 1257.0,700.0 C1260.0,723.5 1261.2,752.7 1261.0,771.0 C1260.8,789.3 1259.5,796.8 1256.0,810.0 C1252.5,823.2 1247.3,838.3 1240.0,850.0 C1232.7,861.7 1224.5,871.2 1212.0,880.0 C1199.5,888.8 1181.7,897.3 1165.0,903.0 C1148.3,908.7 1129.5,912.7 1112.0,914.0 C1094.5,915.3 1077.0,914.2 1060.0,911.0 C1043.0,907.8 1026.7,903.2 1010.0,895.0 C993.3,886.8 973.3,874.5 960.0,862.0 C946.7,849.5 937.3,834.5 930.0,820.0 C922.7,805.5 918.7,789.2 916.0,775.0 C913.3,760.8 913.8,749.2 914.0,735.0 C914.2,720.8 915.7,704.2 917.0,690.0 C918.3,675.8 919.8,666.3 922.0,650.0 C924.2,633.7 924.5,609.5 930.0,592.0 C935.5,574.5 947.3,559.0 955.0,545.0 C962.7,531.0 967.7,518.7 976.0,508.0 C984.3,497.3 994.0,488.5 1005.0,481.0 C1016.0,473.5 1028.2,466.5 1042.0,463.0 C1055.8,459.5 1072.0,459.2 1087.7,460.0Z" fill="#4a2424" filter="url(#b2)" opacity="0.6"/>
<path d="M1087.7,452.9 C1104.2,453.7 1125.1,456.8 1140.0,461.0 C1154.9,465.2 1165.8,470.2 1177.0,478.0 C1188.2,485.8 1199.5,497.5 1207.0,508.0 C1214.5,518.5 1218.7,532.3 1222.0,541.0 C1225.3,549.7 1225.2,545.2 1227.0,560.0 C1228.8,574.8 1229.8,606.7 1233.0,630.0 C1236.2,653.3 1242.7,676.5 1246.0,700.0 C1249.3,723.5 1252.2,754.0 1252.6,771.0 C1253.0,788.0 1252.0,790.2 1248.3,802.2 C1244.6,814.2 1237.7,831.5 1230.5,842.9 C1223.3,854.3 1216.8,863.1 1205.0,870.8 C1193.2,878.5 1175.5,884.3 1160.0,889.0 C1144.5,893.7 1127.8,897.8 1112.0,899.0 C1096.2,900.2 1081.5,899.2 1065.2,896.2 C1048.9,893.2 1031.1,888.7 1014.4,881.0 C997.7,873.3 977.9,861.5 965.0,850.0 C952.1,838.5 943.5,825.0 937.0,812.0 C930.5,799.0 928.2,784.8 926.0,771.7 C923.8,758.6 923.8,746.2 924.0,733.5 C924.2,720.8 925.7,711.0 927.0,695.4 C928.3,679.8 930.0,659.1 932.0,640.0 C934.0,620.9 935.8,597.2 938.7,580.7 C941.6,564.2 944.0,553.8 949.3,540.9 C954.6,528.0 961.8,514.2 970.4,503.3 C979.0,492.4 989.2,483.0 1000.9,475.2 C1012.6,467.4 1026.2,460.1 1040.7,456.4 C1055.2,452.7 1071.2,452.1 1087.7,452.9Z" fill="#ffb8b8" filter="url(#b1)"/>
<path d="M1092.3,494.0 C1098.5,494.8 1102.0,485.7 1111.0,485.7 C1120.0,485.7 1135.3,489.1 1146.3,494.0 C1157.3,498.9 1168.6,507.6 1176.8,515.0 C1185.0,522.4 1190.9,530.7 1195.6,538.5 C1200.3,546.3 1203.0,553.0 1205.0,562.0 C1207.0,571.0 1208.9,583.8 1207.3,592.5 C1205.7,601.2 1194.3,607.8 1195.6,614.0 C1196.9,620.2 1209.6,621.5 1215.0,630.0 C1220.4,638.5 1224.7,653.3 1228.0,665.0 C1231.3,676.7 1234.2,690.7 1235.0,700.0 C1235.8,709.3 1235.5,713.5 1233.0,720.8 C1230.5,728.1 1226.2,741.6 1220.3,743.7 C1214.4,745.8 1205.0,733.9 1197.4,733.5 C1189.8,733.1 1177.5,737.8 1174.5,741.2 C1171.5,744.6 1174.5,748.0 1179.6,753.9 C1184.7,759.8 1198.2,770.4 1205.0,776.8 C1211.8,783.1 1218.2,785.2 1220.3,792.0 C1222.4,798.8 1220.3,808.1 1217.8,817.4 C1215.2,826.7 1211.4,838.7 1205.0,848.0 C1198.6,857.3 1190.2,867.9 1179.6,873.4 C1169.0,878.9 1153.8,881.1 1141.5,881.0 C1129.2,880.9 1114.4,877.2 1106.0,873.0 C1097.6,868.8 1096.0,855.7 1091.0,856.0 C1086.0,856.3 1086.7,872.5 1076.0,875.0 C1065.3,877.5 1041.6,874.5 1027.1,870.8 C1012.6,867.1 998.3,861.0 989.0,853.0 C979.7,845.0 975.5,833.1 971.2,822.5 C967.0,811.9 964.4,798.2 963.5,789.5 C962.6,780.8 968.5,775.9 966.0,770.0 C963.5,764.1 952.3,762.1 948.3,753.9 C944.3,745.7 943.3,734.8 942.0,720.8 C940.7,706.8 939.9,681.8 940.7,670.0 C941.5,658.2 943.9,657.5 946.9,650.0 C949.9,642.5 955.1,632.9 958.6,625.3 C962.1,617.7 967.4,611.6 968.0,604.2 C968.6,596.8 962.2,590.1 962.2,580.7 C962.2,571.3 963.5,559.7 968.0,548.0 C972.5,536.3 980.9,520.2 989.1,510.4 C997.3,500.6 1003.2,494.2 1017.3,489.3 C1031.4,484.4 1061.1,480.2 1073.6,481.0 C1086.1,481.8 1086.1,493.2 1092.3,494.0Z" fill="#ff1c14" filter="url(#b1)"/>
<path d="M1092.3,494.0 C1098.5,494.8 1102.0,485.7 1111.0,485.7 C1120.0,485.7 1135.3,489.1 1146.3,494.0 C1157.3,498.9 1168.6,507.6 1176.8,515.0 C1185.0,522.4 1190.9,530.7 1195.6,538.5 C1200.3,546.3 1203.0,553.0 1205.0,562.0 C1207.0,571.0 1208.9,583.8 1207.3,592.5 C1205.7,601.2 1194.3,607.8 1195.6,614.0 C1196.9,620.2 1209.6,621.5 1215.0,630.0 C1220.4,638.5 1224.7,653.3 1228.0,665.0 C1231.3,676.7 1234.2,690.7 1235.0,700.0 C1235.8,709.3 1235.5,713.5 1233.0,720.8 C1230.5,728.1 1226.2,741.6 1220.3,743.7 C1214.4,745.8 1205.0,733.9 1197.4,733.5 C1189.8,733.1 1177.5,737.8 1174.5,741.2 C1171.5,744.6 1174.5,748.0 1179.6,753.9 C1184.7,759.8 1198.2,770.4 1205.0,776.8 C1211.8,783.1 1218.2,785.2 1220.3,792.0 C1222.4,798.8 1220.3,808.1 1217.8,817.4 C1215.2,826.7 1211.4,838.7 1205.0,848.0 C1198.6,857.3 1190.2,867.9 1179.6,873.4 C1169.0,878.9 1153.8,881.1 1141.5,881.0 C1129.2,880.9 1114.4,877.2 1106.0,873.0 C1097.6,868.8 1096.0,855.7 1091.0,856.0 C1086.0,856.3 1086.7,872.5 1076.0,875.0 C1065.3,877.5 1041.6,874.5 1027.1,870.8 C1012.6,867.1 998.3,861.0 989.0,853.0 C979.7,845.0 975.5,833.1 971.2,822.5 C967.0,811.9 964.4,798.2 963.5,789.5 C962.6,780.8 968.5,775.9 966.0,770.0 C963.5,764.1 952.3,762.1 948.3,753.9 C944.3,745.7 943.3,734.8 942.0,720.8 C940.7,706.8 939.9,681.8 940.7,670.0 C941.5,658.2 943.9,657.5 946.9,650.0 C949.9,642.5 955.1,632.9 958.6,625.3 C962.1,617.7 967.4,611.6 968.0,604.2 C968.6,596.8 962.2,590.1 962.2,580.7 C962.2,571.3 963.5,559.7 968.0,548.0 C972.5,536.3 980.9,520.2 989.1,510.4 C997.3,500.6 1003.2,494.2 1017.3,489.3 C1031.4,484.4 1061.1,480.2 1073.6,481.0 C1086.1,481.8 1086.1,493.2 1092.3,494.0Z" fill="none" stroke="#ffa800" stroke-width="56" filter="url(#b6)" opacity="0.95" clip-path="url(#brainclip)"/>
<path d="M1092.3,494.0 C1098.5,494.8 1102.0,485.7 1111.0,485.7 C1120.0,485.7 1135.3,489.1 1146.3,494.0 C1157.3,498.9 1168.6,507.6 1176.8,515.0 C1185.0,522.4 1190.9,530.7 1195.6,538.5 C1200.3,546.3 1203.0,553.0 1205.0,562.0 C1207.0,571.0 1208.9,583.8 1207.3,592.5 C1205.7,601.2 1194.3,607.8 1195.6,614.0 C1196.9,620.2 1209.6,621.5 1215.0,630.0 C1220.4,638.5 1224.7,653.3 1228.0,665.0 C1231.3,676.7 1234.2,690.7 1235.0,700.0 C1235.8,709.3 1235.5,713.5 1233.0,720.8 C1230.5,728.1 1226.2,741.6 1220.3,743.7 C1214.4,745.8 1205.0,733.9 1197.4,733.5 C1189.8,733.1 1177.5,737.8 1174.5,741.2 C1171.5,744.6 1174.5,748.0 1179.6,753.9 C1184.7,759.8 1198.2,770.4 1205.0,776.8 C1211.8,783.1 1218.2,785.2 1220.3,792.0 C1222.4,798.8 1220.3,808.1 1217.8,817.4 C1215.2,826.7 1211.4,838.7 1205.0,848.0 C1198.6,857.3 1190.2,867.9 1179.6,873.4 C1169.0,878.9 1153.8,881.1 1141.5,881.0 C1129.2,880.9 1114.4,877.2 1106.0,873.0 C1097.6,868.8 1096.0,855.7 1091.0,856.0 C1086.0,856.3 1086.7,872.5 1076.0,875.0 C1065.3,877.5 1041.6,874.5 1027.1,870.8 C1012.6,867.1 998.3,861.0 989.0,853.0 C979.7,845.0 975.5,833.1 971.2,822.5 C967.0,811.9 964.4,798.2 963.5,789.5 C962.6,780.8 968.5,775.9 966.0,770.0 C963.5,764.1 952.3,762.1 948.3,753.9 C944.3,745.7 943.3,734.8 942.0,720.8 C940.7,706.8 939.9,681.8 940.7,670.0 C941.5,658.2 943.9,657.5 946.9,650.0 C949.9,642.5 955.1,632.9 958.6,625.3 C962.1,617.7 967.4,611.6 968.0,604.2 C968.6,596.8 962.2,590.1 962.2,580.7 C962.2,571.3 963.5,559.7 968.0,548.0 C972.5,536.3 980.9,520.2 989.1,510.4 C997.3,500.6 1003.2,494.2 1017.3,489.3 C1031.4,484.4 1061.1,480.2 1073.6,481.0 C1086.1,481.8 1086.1,493.2 1092.3,494.0Z" fill="none" stroke="#ff2a10" stroke-width="9" filter="url(#b3)" clip-path="url(#brainclip)"/>
<g filter="url(#b10)" clip-path="url(#brainclip)"><ellipse cx="1004" cy="565" rx="22" ry="24" fill="#ff1a10"/><ellipse cx="1128" cy="565" rx="16" ry="26" fill="#ff1a10"/><ellipse cx="1090" cy="745" rx="90" ry="68" fill="#ff1a10"/><ellipse cx="1090" cy="655" rx="55" ry="38" fill="#ff1a10"/><ellipse cx="1010" cy="790" rx="28" ry="22" fill="#ff1a10"/><ellipse cx="1170" cy="790" rx="28" ry="22" fill="#ff1a10"/></g>
<g filter="url(#b6)" clip-path="url(#brainclip)"><ellipse cx="1025" cy="522" rx="34" ry="20" fill="#ffff20"/><ellipse cx="1091" cy="548" rx="16" ry="42" fill="#ffe000"/><ellipse cx="1168" cy="590" rx="26" ry="20" fill="#ffff30"/><ellipse cx="1146" cy="522" rx="26" ry="14" fill="#ffc000"/><ellipse cx="985" cy="598" rx="16" ry="22" fill="#ffc800"/><ellipse cx="1032" cy="840" rx="42" ry="15" fill="#ffd800"/><ellipse cx="1180" cy="840" rx="42" ry="15" fill="#ffd000"/><ellipse cx="958" cy="705" rx="10" ry="40" fill="#ffb000"/><ellipse cx="1222" cy="700" rx="10" ry="40" fill="#ffb000"/></g>
<g filter="url(#b10)" clip-path="url(#brainclip)"><ellipse cx="1092" cy="620" rx="85" ry="10" fill="#ff9000" opacity="0.6"/></g>
<path d="M1092.3,494.0 C1098.5,494.8 1102.0,485.7 1111.0,485.7 C1120.0,485.7 1135.3,489.1 1146.3,494.0 C1157.3,498.9 1168.6,507.6 1176.8,515.0 C1185.0,522.4 1190.9,530.7 1195.6,538.5 C1200.3,546.3 1203.0,553.0 1205.0,562.0 C1207.0,571.0 1208.9,583.8 1207.3,592.5 C1205.7,601.2 1194.3,607.8 1195.6,614.0 C1196.9,620.2 1209.6,621.5 1215.0,630.0 C1220.4,638.5 1224.7,653.3 1228.0,665.0 C1231.3,676.7 1234.2,690.7 1235.0,700.0 C1235.8,709.3 1235.5,713.5 1233.0,720.8 C1230.5,728.1 1226.2,741.6 1220.3,743.7 C1214.4,745.8 1205.0,733.9 1197.4,733.5 C1189.8,733.1 1177.5,737.8 1174.5,741.2 C1171.5,744.6 1174.5,748.0 1179.6,753.9 C1184.7,759.8 1198.2,770.4 1205.0,776.8 C1211.8,783.1 1218.2,785.2 1220.3,792.0 C1222.4,798.8 1220.3,808.1 1217.8,817.4 C1215.2,826.7 1211.4,838.7 1205.0,848.0 C1198.6,857.3 1190.2,867.9 1179.6,873.4 C1169.0,878.9 1153.8,881.1 1141.5,881.0 C1129.2,880.9 1114.4,877.2 1106.0,873.0 C1097.6,868.8 1096.0,855.7 1091.0,856.0 C1086.0,856.3 1086.7,872.5 1076.0,875.0 C1065.3,877.5 1041.6,874.5 1027.1,870.8 C1012.6,867.1 998.3,861.0 989.0,853.0 C979.7,845.0 975.5,833.1 971.2,822.5 C967.0,811.9 964.4,798.2 963.5,789.5 C962.6,780.8 968.5,775.9 966.0,770.0 C963.5,764.1 952.3,762.1 948.3,753.9 C944.3,745.7 943.3,734.8 942.0,720.8 C940.7,706.8 939.9,681.8 940.7,670.0 C941.5,658.2 943.9,657.5 946.9,650.0 C949.9,642.5 955.1,632.9 958.6,625.3 C962.1,617.7 967.4,611.6 968.0,604.2 C968.6,596.8 962.2,590.1 962.2,580.7 C962.2,571.3 963.5,559.7 968.0,548.0 C972.5,536.3 980.9,520.2 989.1,510.4 C997.3,500.6 1003.2,494.2 1017.3,489.3 C1031.4,484.4 1061.1,480.2 1073.6,481.0 C1086.1,481.8 1086.1,493.2 1092.3,494.0Z" fill="none" stroke="#ff1a10" stroke-width="18" filter="url(#b3)" clip-path="url(#brainclip)"/>
<g filter="url(#b10)"><path d="M1055,648 L1131,648 L1095,716Z" fill="#701008" opacity="0.95"/><ellipse cx="1120" cy="745" rx="30" ry="20" fill="#c01008" opacity="0.7"/></g>
<g fill="#ffb8b8" filter="url(#b1)"><path d="M934,744 L960,762 L1024,733 L1029,739 L968,776 L945,788 L934,775Z"/><path d="M1172,744 L1192,734 L1204,738 L1218,766 L1236,790 L1250,800 L1222,797 L1205,778 L1180,757Z"/></g>
<g fill="#200" filter="url(#b05)"><circle cx="1229" cy="763" r="3.5"/><circle cx="1236" cy="768" r="3"/><circle cx="1226" cy="773" r="2.5"/><circle cx="1238" cy="753" r="2"/><circle cx="1232" cy="777" r="2"/><ellipse cx="1229.5" cy="813" rx="4.5" ry="5.5"/><circle cx="937" cy="763" r="2.2"/></g>
<path d="M518.7,535.6 C523.8,534.9 535.6,533.2 542.1,533.7 C548.6,534.2 562.3,536.7 567.5,539.6 C572.7,542.5 578.9,551.0 581.2,555.2 C583.5,559.4 583.0,567.7 585.1,570.8 C587.2,573.9 592.7,577.4 596.9,578.7 C601.1,580.0 611.2,579.8 616.4,580.6 C621.6,581.4 630.5,581.4 636.0,584.5 C641.5,587.6 653.8,598.0 657.5,604.0 C661.2,610.0 663.1,623.5 663.4,629.5 C663.7,635.5 661.8,643.5 659.5,649.0 C657.2,654.5 650.8,665.9 645.8,670.6 C640.8,675.3 628.8,681.0 622.3,684.3 C615.8,687.6 604.2,693.4 596.9,695.0 C589.6,696.6 575.3,696.9 567.5,696.0 C559.7,695.1 543.9,690.8 538.2,688.2 C532.5,685.6 527.1,679.0 524.5,676.4 C521.9,673.8 522.1,669.4 518.7,668.6 C515.3,667.8 504.9,671.0 499.0,670.6 C493.1,670.2 474.0,683.3 474.7,665.7 C475.4,648.1 498.1,555.9 504.0,538.6 C509.9,521.3 513.6,536.3 518.7,535.6Z" fill="#663636" filter="url(#b1)"/>
<path d="M1544.4,595.2 C1546.5,591.0 1551.0,583.7 1555.0,581.1 C1559.0,578.5 1568.2,575.8 1574.3,575.8 C1580.4,575.8 1595.5,579.0 1600.7,581.1 C1605.9,583.2 1609.9,588.9 1613.0,591.7 C1616.1,594.5 1620.5,598.2 1623.6,602.2 C1626.7,606.2 1633.6,615.5 1635.9,621.6 C1638.2,627.7 1640.5,641.0 1641.2,648.0 C1641.9,655.0 1642.1,668.7 1641.2,674.3 C1640.3,679.9 1636.2,687.4 1634.1,690.2 C1632.0,693.0 1628.1,695.9 1625.3,695.4 C1622.5,694.9 1615.3,686.7 1613.0,686.7 C1610.7,686.7 1609.4,692.4 1607.8,695.4 C1606.2,698.4 1604.0,705.5 1600.7,709.5 C1597.4,713.5 1589.2,722.5 1583.1,725.3 C1577.0,728.1 1562.5,730.8 1555.0,730.6 C1547.5,730.4 1534.1,725.9 1526.8,723.6 C1519.5,721.3 1506.8,716.3 1500.5,713.0 C1494.2,709.7 1483.1,703.9 1479.3,699.0 C1475.5,694.1 1472.5,682.4 1472.3,676.1 C1472.1,669.8 1474.5,656.9 1477.6,651.5 C1480.7,646.1 1491.5,637.2 1495.2,635.6 C1498.9,634.0 1503.6,639.9 1505.7,639.2 C1507.8,638.5 1509.4,632.3 1511.0,630.4 C1512.6,628.5 1515.4,626.3 1518.0,625.1 C1520.6,623.9 1527.6,623.2 1530.4,621.6 C1533.2,620.0 1537.3,616.3 1539.2,612.8 C1541.1,609.3 1542.3,599.4 1544.4,595.2Z" fill="#663636" filter="url(#b1)"/>
<g clip-path="url(#armclip)"><rect x="470" y="528" width="200" height="172" fill="#000" filter="url(#noisePet)" opacity="0.5"/><rect x="1465" y="570" width="185" height="165" fill="#000" filter="url(#noisePet)" opacity="0.5"/></g>
<ellipse cx="540" cy="640" rx="30" ry="30" fill="#c04040" opacity="0.4" filter="url(#b10)" clip-path="url(#armclip)"/>
<path d="M510,536 L481,668" stroke="#d09090" stroke-width="34" filter="url(#b8w)" opacity="0.55" clip-path="url(#armclip)"/>
<path d="M504,538 L476,665" stroke="#f0c0c0" stroke-width="5" filter="url(#b1)" opacity="0.95"/>
<path d="M551.9,568.9 C559.5,564.8 564.6,575.4 567.5,584.5 C570.4,593.6 573.5,620.8 571.5,629.5 C569.5,638.2 560.9,641.9 553.9,642.2 C546.9,642.5 530.1,636.0 524.5,631.5 C518.9,627.0 512.6,621.3 516.7,611.9 C520.8,602.5 544.3,573.0 551.9,568.9Z" fill="#f5d2d2" filter="url(#b1)"/>
<path d="M546,600 L553,603 L554,620 L545,621 L541,612Z" fill="#1a0808" stroke="#1a0808" stroke-width="3" stroke-linejoin="round" filter="url(#b1)"/>
<path d="M1570.0,613.0 L1590.0,623.0 L1610.0,645.0 L1607.0,656.0 L1581.0,668.0 L1568.0,660.0 L1564.0,637.0Z" fill="#f5d2d2" stroke="#f5d2d2" stroke-width="9" stroke-linejoin="round" filter="url(#b1)"/>
<path d="M1578,633 L1588,639 L1593,650 L1580,653 L1576,645Z" fill="#1a0808" stroke="#1a0808" stroke-width="4" stroke-linejoin="round" filter="url(#b1)"/>
<g fill="none" stroke="#a8a8a8" filter="url(#b05)">
<path d="M613.8,1088.5 L852,1249.8" stroke-width="2.6"/>
<path d="M1574,1084.8 L1320,1252" stroke-width="2.6"/>
<path d="M855,1251.5 L950,1252" stroke-width="2" opacity="0.35"/>
</g><path d="M662,1081.5 Q700,1089 740,1102 L740,1104 Q700,1094 664,1088Z" fill="#a8a8a8" filter="url(#b05)"/><g fill="none" stroke="#a8a8a8" filter="url(#b05)">
<path d="M738,1103 C820,1125 920,1145 1000,1150 C1060,1154 1134,1155 1220,1147 C1300,1138 1366,1122 1464,1096" stroke-width="2" stroke-dasharray="14 18" opacity="0.3"/>
</g><path d="M1464,1095 C1500,1084 1530,1080 1574,1081 L1574,1086 C1530,1085 1500,1089 1464,1098Z" fill="#a8a8a8" filter="url(#b05)"/><g fill="none" stroke="#a8a8a8" filter="url(#b05)">
</g>
<path d="M604,1083 L628,1083 L642,1087 L630,1092 L612,1093Z" fill="#a8a8a8" filter="url(#b1)" opacity="0.7"/>
<g fill="none" stroke="#a8a8a8" filter="url(#b05)">
<path d="M587,1041 L614,1052" stroke-width="1.5" opacity="0.5"/>
</g>
<path d="M1552,1052 C1560,1046 1578,1040 1590,1040 L1590,1058 C1575,1062 1558,1062 1552,1058Z" fill="#a8a8a8" filter="url(#b1)"/></g><defs><linearGradient id="cbar" x1="0" y1="0" x2="0" y2="1">
<stop offset="0" stop-color="#fff"/><stop offset="0.113" stop-color="#fff"/>
<stop offset="0.206" stop-color="#ffff00"/><stop offset="0.421" stop-color="#ffff00"/>
<stop offset="0.5" stop-color="#ffa000"/><stop offset="0.587" stop-color="#ff0500"/>
<stop offset="0.834" stop-color="#ff0000"/><stop offset="0.93" stop-color="#500000"/><stop offset="1" stop-color="#000"/></linearGradient></defs>
<rect x="2042" y="420" width="56" height="494" fill="url(#cbar)"/>
<g fill="#e8e800"><rect x="2042" y="419" width="58" height="3"/><rect x="2097.5" y="419" width="3" height="537"/><rect x="2042" y="953.5" width="58" height="2.6"/></g>
</svg>
<div class="a ye" style="left:2060.0px;top:148.3px;transform:scaleY(1.08);transform-origin:0 24.7px">Axial2 Volume 2/Volume 1</div>
<div class="a ye" style="left:2060.0px;top:180.0px;transform:scaleY(1.08);transform-origin:0 24.7px">Ex: 381</div>
<div class="a ye" style="left:2060.0px;top:210.3px;transform:scaleY(1.08);transform-origin:0 24.7px">Se: 1</div>
<div class="a ye" style="left:2060.0px;top:242.1px;transform:scaleY(1.08);transform-origin:0 24.7px"> I: 85.2</div>
<div class="a ye" style="left:2060.0px;top:273.7px;transform:scaleY(1.08);transform-origin:0 24.7px">Im: 35</div>
<div class="a ye" style="left:2060.0px;top:337.1px;transform:scaleY(1.08);transform-origin:0 24.7px">DFOV 60.0 cm</div>
<div class="a ye" style="left:2060.0px;top:401.3px;transform:scaleY(1.08);transform-origin:0 24.7px">152/7</div>
<div class="a ye" style="left:2118.5px;top:433.1px;transform:scaleY(1.08);transform-origin:0 24.7px">16.5</div>
<div class="a ye" style="left:2118.5px;top:938.1px;transform:scaleY(1.08);transform-origin:0 24.7px">0.0</div>
<div class="a ye" style="left:2060.0px;top:1001.7px;transform:scaleY(1.08);transform-origin:0 24.7px">50 % PET</div>
<div class="a ye" style="left:2060.0px;top:1091.6px;transform:scaleY(1.08);transform-origin:0 24.7px">3.3/</div>
<div class="a ye" style="left:2060.0px;top:1217.3px;transform:scaleY(1.08);transform-origin:0 24.7px">3.3mm /3.3var.sp</div>
<div class="a ye" style="left:2060.0px;top:1280.4px;transform:scaleY(1.08);transform-origin:0 24.7px">09:53:38 AM</div>
<div class="a ye" style="left:2058.5px;top:1313.0px;transform:scaleY(1.08);transform-origin:0 24.7px">m=0.0 M=16.5 g/ml</div>
<div class="a ye" style="left:2610.0px;top:182.4px;transform:scaleY(1.08);transform-origin:0 24.7px">A 300</div>
<div class="a ye" style="left:2609.0px;top:1305.5px;transform:scaleY(1.08);transform-origin:0 24.7px">P 300</div>
<div class="a ye" style="left:3135.0px;top:1312.1px;transform:scaleY(1.08);transform-origin:0 24.7px">V=0.00</div>
<div class="a ye" style="left:3223.0px;top:665.8px;transform:scaleY(1.08);transform-origin:0 24.7px">L</div>
<div class="a ye" style="left:3223.0px;top:729.1px;transform:scaleY(1.08);transform-origin:0 24.7px">3</div>
<div class="a ye" style="left:3223.0px;top:760.9px;transform:scaleY(1.08);transform-origin:0 24.7px">0</div>
<div class="a ye" style="left:3223.0px;top:792.6px;transform:scaleY(1.08);transform-origin:0 24.7px">0</div>

<div class="a" style="left:306px;top:118px;width:3134px;height:2px;background:#46698f"></div>
<div class="a" style="left:306px;top:118px;width:2px;height:1248px;background:#46698f"></div>
<div class="a" style="left:1873px;top:118px;width:2px;height:1248px;background:#46698f"></div>
<div class="a" style="left:3438px;top:118px;width:2px;height:1248px;background:#46698f"></div>
<div class="a" style="left:306px;top:1365px;width:3134px;height:1px;background:#46698f"></div>

<!-- scrollbar thumbs -->
<div class="a" style="left:1847px;top:260px;width:12px;height:39px;border-radius:6px;background:#19353a"></div>
<div class="a" style="left:3413px;top:275px;width:12px;height:39px;border-radius:6px;background:#19353a"></div>

<!-- CT overlay -->
<div class="a ov" style="left:328.5px;top:140.5px;line-height:20px">Doe, Jane
6482364817264</div>
<div class="a ov" style="left:1433px;top:140.5px;width:400px;text-align:right;line-height:20px"><span style="display:inline-block;transform:scaleX(0.92);transform-origin:100% 50%">FORFILE CD PET SCAN</span>
Apr 22, 2005 09:49:12</div>
<div class="a ov" style="left:328px;top:1266px;line-height:20px">Ser: 1
Img: 34 (35/311)
512 x 512
CT SlicesCT2</div>
<div class="a ov" style="left:1433px;top:1306px;width:400px;text-align:right;line-height:20px">Zoom: 243%
W 167 L 59</div>
<div class="a" style="left:1089.5px;top:125.5px;font-size:16px;color:#d8d8d8">A</div>
<div class="a" style="left:312.5px;top:705px;font-size:16px;color:#d8d8d8">R</div>

<!-- PET overlay -->
<div class="a ov" style="left:1895px;top:140.5px;line-height:20px">Doe, Jane
6482364817264</div>
<div class="a ov" style="left:3000px;top:140.5px;width:399px;text-align:right;line-height:20px"><span style="display:inline-block;transform:scaleX(0.92);transform-origin:100% 50%">FORFILE CD PET SCAN</span>
Apr 22, 2005 09:49:12</div>
<div class="a ov" style="left:1895px;top:1266px;line-height:20px">Ser: 2
Img: 6 (7/50)
512 x 512
Screen savePT152</div>
<div class="a ov" style="left:3000px;top:1306px;width:399px;text-align:right;line-height:20px">Zoom: 243%
W 107 L 104</div>

</body></html>
